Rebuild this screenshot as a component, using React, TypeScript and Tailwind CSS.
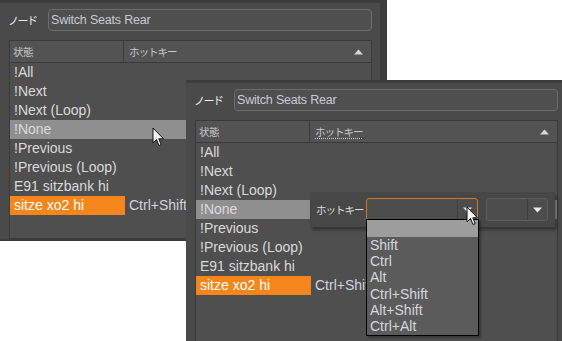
import React from "react";

const rows = [
  "!All",
  "!Next",
  "!Next (Loop)",
  "!None",
  "!Previous",
  "!Previous (Loop)",
  "E91 sitzbank hi",
  "sitze xo2 hi",
];

function Cursor({ className }: { className: string }) {
  return (
    <svg className={className} width="13" height="20" viewBox="0 0 13 20">
      <path
        d="M1 1 L1 16 L4.5 12.5 L7 18.5 L9.2 17.6 L6.8 11.8 L11.5 11.8 Z"
        fill="#f2f2f2"
        stroke="#111"
        strokeWidth="1"
        strokeLinejoin="miter"
      />
    </svg>
  );
}

function Win({ className, hoverHeader }: { className: string; hoverHeader?: boolean }) {
  return (
    <div className={`absolute w-[387px] bg-[#4a4a4a] border-t-[3px] border-r-[7px] border-[#3d3d3d] flex flex-col ${className}`}>
      <div className="flex items-center h-[22px] mt-[6px]">
        <span className="w-[48px] pl-[8px] text-[11px] tracking-[-1.5px] text-[#ececec] [font-family:'Noto_Sans_CJK_JP',sans-serif]">
          ノード
        </span>
        <div className="w-[324px] h-[22px] rounded-[4px] border border-[#6c6c6c] bg-[#4f4f4f] flex items-center pl-[2px] text-[12.5px] tracking-[-0.2px] text-[#c6ccd6]">
          Switch Seats Rear
        </div>
      </div>
      <div className="ml-[9px] w-[363px] mt-[9px] flex-1 flex flex-col border border-[#3a3a3a] bg-[#4f4f4f]">
        <div className="h-[22px] flex bg-[#535353] border-b border-[#3a3a3a] text-[10.5px] text-[#c8c8c8] [font-family:'Noto_Sans_CJK_JP',sans-serif]">
          <div className="w-[114px] border-r border-[#3c3c3c] flex items-center pl-[3px] tracking-[-0.5px]">状態</div>
          <div className="flex-1 flex items-center pl-[5px] pr-[8px] justify-between">
            <span className={`tracking-[-1px] ${hoverHeader ? "underline decoration-dotted decoration-[#d0d0d0] underline-offset-2" : ""}`}>
              ホットキー
            </span>
            <svg width="9" height="6" viewBox="0 0 9 6">
              <path d="M0 5.5 L4.5 0.5 L9 5.5 Z" fill="#d6d6d6" />
            </svg>
          </div>
        </div>
        <div className="flex flex-col text-[14px] text-[#dadada]">
          {rows.map((r) => {
            const hl = r === "!None";
            const sel = r === "sitze xo2 hi";
            return (
              <div key={r} className={`h-[19px] flex items-center ${hl ? "bg-[#8f8f8f]" : ""}`}>
                <div className={`w-[115px] h-full flex items-center pl-[4px] whitespace-nowrap ${sel ? "bg-[#f4861c] text-white" : ""}`}>
                  {r}
                </div>
                {sel && <div className="pl-[4px] text-[#d0d4da] whitespace-nowrap">Ctrl+Shift</div>}
              </div>
            );
          })}
        </div>
      </div>
    </div>
  );
}

export default function App() {
  return (
    <div className="relative w-[562px] h-[341px] overflow-hidden bg-white [font-family:'Liberation_Sans',sans-serif]">
      <Win className="left-0 top-0 h-[241px] border-b-[2px]" />
      <Cursor className="absolute left-[152px] top-[127px]" />
      <Win className="left-[186px] top-[80px] h-[280px]" hoverHeader />

      {/* hotkey editor panel */}
      <div className="absolute left-[310px] top-[192px] w-[245px] h-[35px] bg-[#474747] shadow-[2px_3px_3px_rgba(0,0,0,0.35)] flex items-center">
        <span className="w-[56px] pl-[6px] text-[10.5px] tracking-[-1px] text-[#dcdcdc] [font-family:'Noto_Sans_CJK_JP',sans-serif]">
          ホットキー
        </span>
        <div className="w-[112px] h-[23px] rounded-[3px] border border-[#c97a2c] bg-[#4d4d4d] flex">
          <div className="flex-1" />
          <div className="w-[20px] border-l border-[#3e3e3e] flex items-center justify-center">
            <svg width="9" height="6" viewBox="0 0 9 6">
              <path d="M0 0.5 L9 0.5 L4.5 5.5 Z" fill="#e0e0e0" />
            </svg>
          </div>
        </div>
        <div className="ml-[8px] w-[62px] h-[23px] rounded-[3px] border border-[#5e5e5e] bg-[#4d4d4d] flex">
          <div className="flex-1" />
          <div className="w-[20px] border-l border-[#3e3e3e] flex items-center justify-center">
            <svg width="9" height="6" viewBox="0 0 9 6">
              <path d="M0 0.5 L9 0.5 L4.5 5.5 Z" fill="#e8e8e8" />
            </svg>
          </div>
        </div>
      </div>

      {/* dropdown list */}
      <div className="absolute left-[366px] top-[219px] w-[113px] h-[117px] border border-black bg-[#5b5b5b] shadow-[2px_2px_2px_rgba(0,0,0,0.3)] flex flex-col text-[14px] text-[#d4d8de]">
        <div className="h-[17px] bg-[#9d9d9d]" />
        {["Shift", "Ctrl", "Alt", "Ctrl+Shift", "Alt+Shift", "Ctrl+Alt"].map((t) => (
          <div key={t} className="h-[16.2px] flex items-center pl-[3px] leading-none">
            {t}
          </div>
        ))}
      </div>

      <Cursor className="absolute left-[466px] top-[206px]" />
    </div>
  );
}
